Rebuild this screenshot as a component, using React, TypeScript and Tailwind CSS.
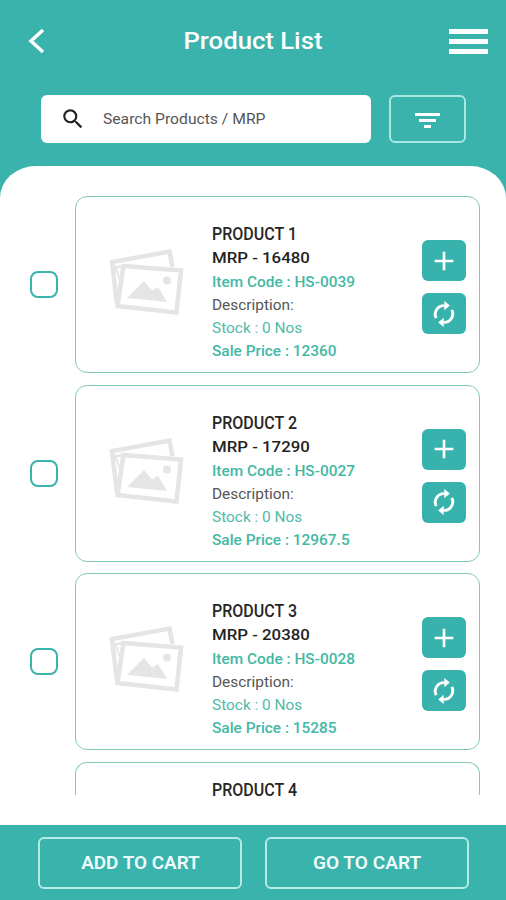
import { MdAdd, MdSearch } from "react-icons/md";

type Product = {
  name: string;
  mrp: string;
  code: string;
  price: string;
};

const products: Product[] = [
  { name: "PRODUCT 1", mrp: "16480", code: "HS-0039", price: "12360" },
  { name: "PRODUCT 2", mrp: "17290", code: "HS-0027", price: "12967.5" },
  { name: "PRODUCT 3", mrp: "20380", code: "HS-0028", price: "15285" },
];

// Placeholder for products without a photo
function NoImage() {
  return (
    <svg width="76" height="68" viewBox="0 0 76 68" fill="none">
      <path d="M8 56 L3 14 L60.500 3.500 L63.500 19" stroke="#e5e5e6" strokeWidth="4.5" />
      <path d="M5 18 L15 17 L12 38 Z" fill="#e5e5e6" />
      <path d="M8 20 L12.500 20 L10.500 29 Z" fill="#fff" />
      <path d="M14.5 18 L72 22.500 L67.500 64.500 L8.500 58 Z" fill="#fff" stroke="#e5e5e6" strokeWidth="4.5" />
      <path d="M18 50 L35 33 L43 42.500 L49 39 L58 54 Z" fill="#e5e5e6" />
      <circle cx="58" cy="32.500" r="4" fill="#e5e5e6" />
    </svg>
  );
}

function RefreshIcon() {
  return (
    <svg width="24" height="26" viewBox="0 0 24 26" fill="none">
      <path d="M12.500 4.600 A8.700 8.700 0 0 0 4.200 17.200" stroke="white" strokeWidth="2.900" />
      <path d="M11.500 21.400 A8.700 8.700 0 0 0 19.800 8.800" stroke="white" strokeWidth="2.900" />
      <path d="M12.300 0 L17.800 4.600 L12.300 9.200 Z M11.700 16.800 L6.200 21.400 L11.700 26 Z" fill="white" />
    </svg>
  );
}

function ActionButton({ children }: { children: React.ReactNode }) {
  return (
    <button className="flex h-[41px] w-11 items-center justify-center rounded-md bg-[#37b2ac] text-white">
      {children}
    </button>
  );
}

function ProductName({ children }: { children: React.ReactNode }) {
  return (
    <p className="h-6 w-max origin-left scale-x-[0.89] text-[18px] leading-[22px] font-medium text-[#262626]">
      {children}
    </p>
  );
}

function ProductRow({ product }: { product: Product }) {
  return (
    <div className="flex h-[177px] shrink-0 items-center pl-[30px]">
      <div className="h-[27px] w-7 shrink-0 rounded-[8px] border-[2.5px] border-[#3ab3ad]" />
      <div className="ml-[17px] flex h-full w-[405px] shrink-0 rounded-[12px] border-[1.5px] border-[#7fc9bd]">
        <div className="w-[136px] shrink-0 pt-[51px] pl-[33px]">
          <NoImage />
        </div>
        <div className="flex-1 pt-[26px] text-[14px] leading-[23px] whitespace-nowrap">
          <ProductName>{product.name}</ProductName>
          <p className="h-6 w-max origin-left scale-x-[1.2] font-medium text-[#222]">MRP - {product.mrp}</p>
          <p className="w-max origin-left scale-x-[1.1] font-medium text-[#43b8a4]">Item Code : {product.code}</p>
          <p className="w-max origin-left scale-x-[1.1] text-[#555]">Description:</p>
          <p className="w-max origin-left scale-x-[1.1] text-[#4fbba8]">Stock : 0 Nos</p>
          <p className="w-max origin-left scale-x-[1.1] font-medium text-[#43b8a4]">Sale Price : {product.price}</p>
        </div>
        <div className="mr-[13px] flex flex-col gap-3 pt-[43px]">
          <ActionButton>
            <MdAdd size={32} />
          </ActionButton>
          <ActionButton>
            <RefreshIcon />
          </ActionButton>
        </div>
      </div>
    </div>
  );
}

export default function App() {
  return (
    <div className="flex h-[900px] w-[506px] flex-col overflow-hidden bg-[#3ab3ad] font-['Roboto',sans-serif]">
      {/* Header */}
      <header className="flex h-[82px] shrink-0 items-center pr-[18px] pl-[28px] text-white">
        <svg width="39" height="26" viewBox="0 0 39 26" fill="none" stroke="white" strokeWidth="3.5">
          <path d="M15 2 L3 13 L15 24" />
        </svg>
        <h1 className="flex-1 pr-[10px] text-center">
          <span className="inline-block scale-x-[1.07] text-[24px] font-medium">Product List</span>
        </h1>
        <div className="flex w-[39px] flex-col gap-[5px]">
          <span className="h-[5px] bg-white" />
          <span className="h-[5px] bg-white" />
          <span className="h-[5px] bg-white" />
        </div>
      </header>

      {/* Search */}
      <div className="flex h-[84px] shrink-0 gap-[18px] pt-[13px] pl-[41px]">
        <div className="flex h-12 w-[330px] items-center rounded-md bg-white pl-[19px]">
          <MdSearch size={26} color="#222" />
          <span className="ml-[17px] origin-left scale-x-[1.12] text-[14px] text-[#555]">Search Products / MRP</span>
        </div>
        <button className="flex h-12 w-[77px] items-center justify-center rounded-md border-2 border-[#a8e8e3]">
          <span className="flex flex-col items-center gap-[3px] pt-[3px]">
            <span className="h-[3px] w-[25px] bg-white" />
            <span className="h-[3px] w-[17px] bg-white" />
            <span className="h-[3px] w-[7px] bg-white" />
          </span>
        </button>
      </div>

      {/* List */}
      <main className="h-[659px] shrink-0 rounded-t-[36px_32px] bg-white pt-[30px]">
        <div className="flex flex-col gap-[11.5px]">
          {products.map((p) => (
            <ProductRow key={p.name} product={p} />
          ))}
          {/* only the top of the next card is in view */}
          <div className="ml-[75px] h-[33px] w-[405px] shrink-0 rounded-t-[12px] border-[1.5px] border-b-0 border-[#7fc9bd] pt-[16px] pl-[136px]">
            <ProductName>PRODUCT 4</ProductName>
          </div>
        </div>
      </main>

      {/* Cart actions */}
      <footer className="flex flex-1 gap-[23px] pt-3 pl-[38px] text-[18px] font-semibold text-[#effdfc]">
        <button className="flex h-[52px] w-[204px] items-center justify-center rounded-md border-2 border-[#b5eae6]">
          <span className="-mt-0.5 scale-x-[1.05]">ADD TO CART</span>
        </button>
        <button className="flex h-[52px] w-[204px] items-center justify-center rounded-md border-2 border-[#b5eae6]">
          <span className="-mt-0.5 scale-x-[1.06]">GO TO CART</span>
        </button>
      </footer>
    </div>
  );
}
